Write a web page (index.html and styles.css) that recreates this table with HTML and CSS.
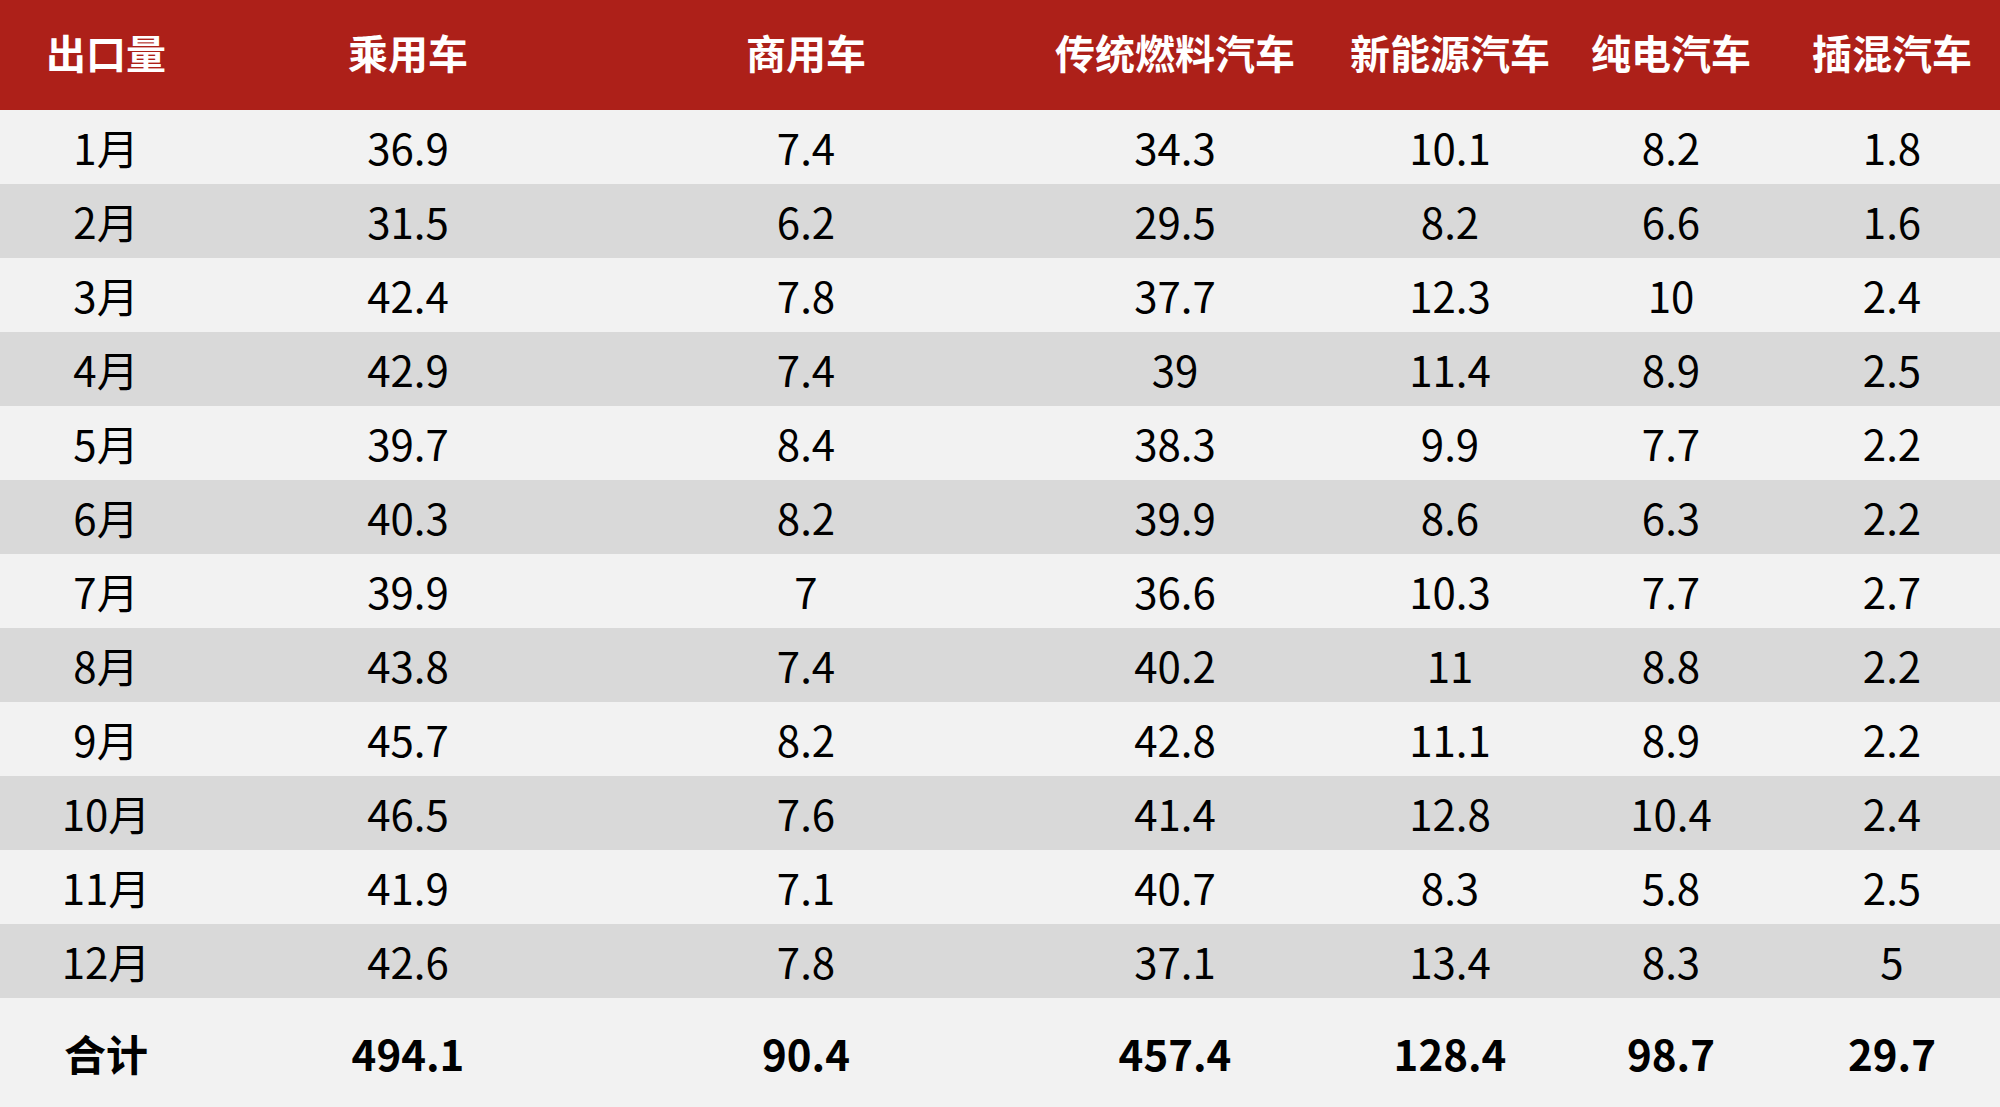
FILE: index.html
```html
<!DOCTYPE html>
<html lang="zh-CN">
<head>
<meta charset="utf-8">
<title>出口量</title>
<link rel="stylesheet" href="styles.css">
</head>
<body>
<table class="data">
  <colgroup>
    <col class="c1"><col class="c2"><col class="c3"><col class="c4"><col class="c5"><col class="c6"><col class="c7">
  </colgroup>
  <thead>
    <tr><th>出口量</th><th>乘用车</th><th>商用车</th><th>传统燃料汽车</th><th>新能源汽车</th><th>纯电汽车</th><th>插混汽车</th></tr>
  </thead>
  <tbody>
    <tr class="odd"><td>1月</td><td>36.9</td><td>7.4</td><td>34.3</td><td>10.1</td><td>8.2</td><td>1.8</td></tr>
    <tr class="even"><td>2月</td><td>31.5</td><td>6.2</td><td>29.5</td><td>8.2</td><td>6.6</td><td>1.6</td></tr>
    <tr class="odd"><td>3月</td><td>42.4</td><td>7.8</td><td>37.7</td><td>12.3</td><td>10</td><td>2.4</td></tr>
    <tr class="even"><td>4月</td><td>42.9</td><td>7.4</td><td>39</td><td>11.4</td><td>8.9</td><td>2.5</td></tr>
    <tr class="odd"><td>5月</td><td>39.7</td><td>8.4</td><td>38.3</td><td>9.9</td><td>7.7</td><td>2.2</td></tr>
    <tr class="even"><td>6月</td><td>40.3</td><td>8.2</td><td>39.9</td><td>8.6</td><td>6.3</td><td>2.2</td></tr>
    <tr class="odd"><td>7月</td><td>39.9</td><td>7</td><td>36.6</td><td>10.3</td><td>7.7</td><td>2.7</td></tr>
    <tr class="even"><td>8月</td><td>43.8</td><td>7.4</td><td>40.2</td><td>11</td><td>8.8</td><td>2.2</td></tr>
    <tr class="odd"><td>9月</td><td>45.7</td><td>8.2</td><td>42.8</td><td>11.1</td><td>8.9</td><td>2.2</td></tr>
    <tr class="even"><td>10月</td><td>46.5</td><td>7.6</td><td>41.4</td><td>12.8</td><td>10.4</td><td>2.4</td></tr>
    <tr class="odd"><td>11月</td><td>41.9</td><td>7.1</td><td>40.7</td><td>8.3</td><td>5.8</td><td>2.5</td></tr>
    <tr class="even"><td>12月</td><td>42.6</td><td>7.8</td><td>37.1</td><td>13.4</td><td>8.3</td><td>5</td></tr>
  </tbody>
  <tfoot>
    <tr class="total"><td>合计</td><td>494.1</td><td>90.4</td><td>457.4</td><td>128.4</td><td>98.7</td><td>29.7</td></tr>
  </tfoot>
</table>
</body>
</html>
```

FILE: styles.css
```css
html, body {
  margin: 0;
  padding: 0;
  background: #f2f2f2;
}
body {
  width: 2000px;
  height: 1107px;
  overflow: hidden;
  font-family: "Noto Sans CJK SC", "Noto Sans", sans-serif;
  color: #000;
}
.data {
  width: 2000px;
  border-collapse: collapse;
  table-layout: fixed;
}
.c1 { width: 212px; }
.c2 { width: 392px; }
.c3 { width: 404px; }
.c4 { width: 334px; }
.c5 { width: 216px; }
.c6 { width: 226px; }
.c7 { width: 216px; }
.data th, .data td {
  padding: 0;
  text-align: center;
  vertical-align: middle;
  white-space: nowrap;
}
.data thead tr {
  height: 110px;
  background: #ad2019;
}
.data th {
  color: #fff;
  font-weight: 700;
  font-size: 40px;
  line-height: 1;
  padding-bottom: 6px;
}
.data tbody tr {
  height: 74px;
}
.data td {
  font-size: 42px;
  line-height: 1;
}
.odd { background: #f2f2f2; }
.even { background: #d9d9d9; }
.total {
  height: 109px;
  background: #f2f2f2;
}
.total td {
  font-weight: 700;
  font-size: 42px;
}
```
